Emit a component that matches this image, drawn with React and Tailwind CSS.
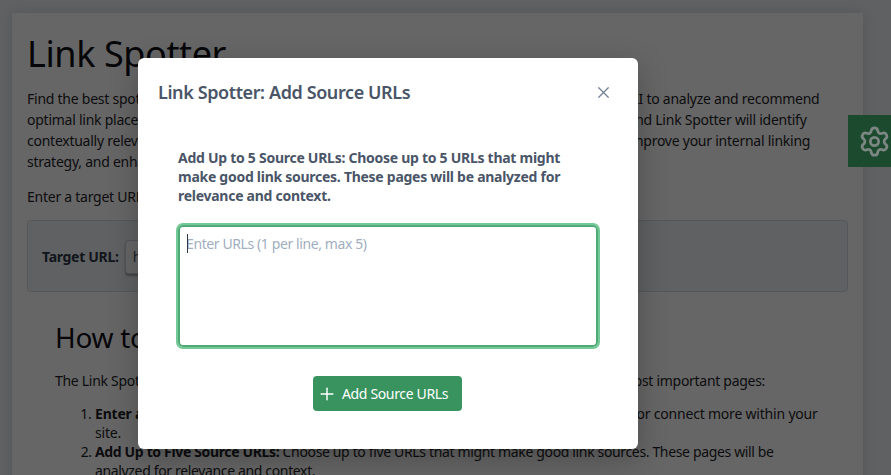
import { useState } from 'react';
import { Settings, Plus, X } from 'lucide-react';

const sans = { fontFamily: '"Noto Sans", "Open Sans", sans-serif' };

const intro = [
  'Find the best spots on your website to add internal links with Link Spotter. This robust tool uses AI to analyze and recommend',
  'optimal link placements for any page on your site. Simply enter a target URL, add source URLs, and Link Spotter will identify',
  'contextually relevant anchor text and locations for every new link, helping you save more time, improve your internal linking',
  'strategy, and enhance the overall structure of your site.',
];

function Page() {
  return (
    <div className="h-screen overflow-hidden bg-[#f0f2f5] pl-3 pr-[28px] pt-[13px]">
      <div className="h-[600px] bg-white px-[15px] pt-[19px] shadow-[0_0_12px_rgba(0,0,0,0.12)]">
        <h1 className="text-[36px] leading-[44px] tracking-[-0.4px] text-[#111118]">Link Spotter</h1>
        <div className="mt-[12px] text-[14px] leading-[21px] tracking-[-0.25px] text-[#1f1f28]">
          {intro.map(line => (
            <p key={line} className="whitespace-nowrap">{line}</p>
          ))}
          <p className="mt-[14px]">Enter a target URL below to get started.</p>
        </div>
        <div className="mt-[13px] flex h-[72px] items-center gap-[6px] rounded border border-[#d5dbe0] bg-[#f0f2f5] pl-[14px] pt-px">
          <span className="text-[14px] font-bold tracking-[-0.3px] text-[#2d3748]">Target URL:</span>
          <input
            readOnly
            value="https://"
            className="h-[34px] w-[500px] rounded border border-[#cbd5e0] bg-white px-[7px] text-[14px] text-[#4a5568] shadow-[0_2px_2px_rgba(0,0,0,0.3)]"
          />
        </div>
        <div className="pl-[28px] pt-[26px]">
          <h2 className="text-[28px] leading-[38px] tracking-[-0.3px] text-[#111118]">How to Use Link Spotter</h2>
          <p className="mt-[15px] whitespace-nowrap text-[14px] leading-[19px] tracking-[-0.29px] text-[#1f1f28]">
            The Link Spotter tool makes it quick and simple to find and add internal links to your site&apos;s most important pages:
          </p>
          <ol className="mt-[14px] list-decimal pl-[40px] text-[14px] leading-[19px] text-[#1f1f28]">
            <li className="whitespace-nowrap tracking-[-0.2px]">
              <b>Enter a Target URL:</b> Choose the page on your site that you would like to rank higher or connect more within your
              <br />site.
            </li>
            <li className="whitespace-nowrap tracking-[-0.35px]">
              <b>Add Up to Five Source URLs:</b> Choose up to five URLs that might make good link sources. These pages will be
              <br />analyzed for relevance and context.
            </li>
          </ol>
        </div>
      </div>
    </div>
  );
}

function SourceModal() {
  const [urls, setUrls] = useState('');
  return (
    <div className="absolute inset-0 z-10 bg-black/60">
      <div className="ml-[138px] mt-[58px] h-[391px] w-[500px] rounded-md bg-white shadow-[0_10px_30px_rgba(0,0,0,0.25)]">
        <div className="flex h-[68px] items-center justify-between pl-[20px] pr-[25px]">
          <h3 className="text-[18px] font-semibold tracking-[-0.4px] text-[#4a5568]">Link Spotter: Add Source URLs</h3>
          <button className="text-[#718096]" aria-label="Close">
            <X size={19} strokeWidth={1.5} />
          </button>
        </div>
        <div className="px-10 pt-[22px]">
          <p className="text-[14px] font-bold leading-[19px] tracking-[-0.27px] text-[#4a5568]">
            Add Up to 5 Source URLs: Choose up to 5 URLs that might
            <br />make good link sources. These pages will be analyzed for
            <br />relevance and context.
          </p>
          <div className="relative mt-[20px]">
            <textarea
              value={urls}
              onChange={e => setUrls(e.target.value)}
              placeholder="Enter URLs (1 per line, max 5)"
              className="block h-[122px] w-full resize-none rounded-[5px] border-2 border-[#4faa76] px-[6px] pt-[7px] text-[14px] leading-[19px] tracking-[-0.4px] text-[#2d3748] shadow-[0_0_0_2px_#74c998] outline-none placeholder:text-[#a0aec0]"
            />
            <span className="absolute left-[9px] top-[9px] h-[19px] w-px bg-[#2d3748]" />
          </div>
          <div className="mt-[29px]">
            <button className="ml-[135px] flex h-[35px] w-[149px] items-center gap-[5px] rounded bg-[#38935f] pl-[4px] text-[14px] tracking-[-0.35px] text-white">
              <Plus size={20} strokeWidth={1.75} />
              Add Source URLs
            </button>
          </div>
        </div>
      </div>
    </div>
  );
}

export default function App() {
  return (
    <div className="relative h-screen overflow-hidden" style={sans}>
      <Page />
      <SourceModal />
      <div className="absolute right-0 top-[115px] z-20 flex h-[52px] w-[43px] items-center bg-[#1b4a2e] pl-[10px] text-[#7c8682]">
        <Settings size={33} strokeWidth={2} className="shrink-0" />
      </div>
    </div>
  );
}
